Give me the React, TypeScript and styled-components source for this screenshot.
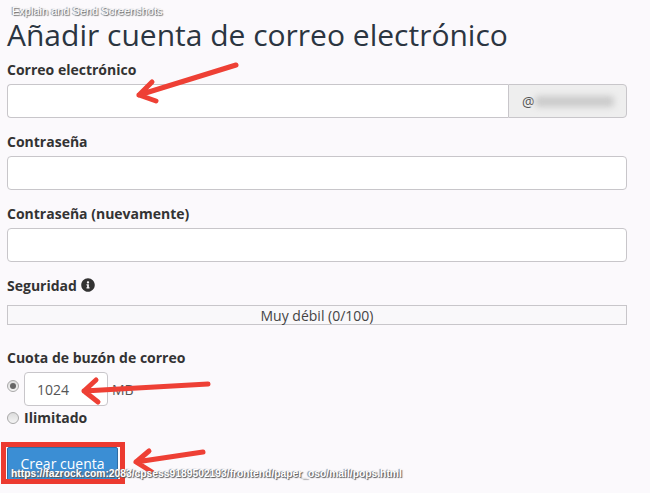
import styled, { createGlobalStyle } from "styled-components";
import { FaInfoCircle } from "react-icons/fa";

const GlobalStyle = createGlobalStyle`
  html, body {
    margin: 0;
    padding: 0;
    background-color: #fbf9fc;
  }
  * {
    box-sizing: border-box;
  }
`;

const Page = styled.div`
  position: relative;
  width: 650px;
  height: 493px;
  overflow: hidden;
  padding: 18px 23px 0 7px;
  font-family: "Open Sans", "Liberation Sans", sans-serif;
  color: #333;
  font-size: 14px;
`;
const Title = styled.h1`
  margin: 0 0 8px;
  font-size: 30px;
  line-height: 34px;
  font-weight: 400;
  color: #2b3541;
  white-space: nowrap;
`;
const Field = styled.div`
  margin-bottom: 14px;
`;
const Label = styled.label`
  display: flex;
  align-items: center;
  gap: 4px;
  height: 20px;
  padding-bottom: 2px;
  margin-bottom: 4px;
  font-size: 14px;
  font-weight: 700;
  color: #333;
`;
const SecurityLabel = styled(Label)`
  margin-bottom: 9px;
`;
const Input = styled.div`
  height: 34px;
  background-color: #fff;
  border: 1px solid #c8c6ca;
  border-radius: 4px;
`;
const InputGroup = styled.div`
  display: flex;
  height: 34px;
`;
const GroupInput = styled(Input)`
  flex: 1;
  height: 100%;
  border-right: none;
  border-radius: 4px 0 0 4px;
`;
const Addon = styled.div`
  display: flex;
  align-items: center;
  width: 119px;
  padding-left: 13px;
  background-color: #eeeeee;
  border: 1px solid #c8c6ca;
  border-radius: 0 4px 4px 0;
  color: #555;
  font-size: 14px;
`;
const BlurredDomain = styled.span`
  width: 79px;
  height: 11px;
  background-color: #cbcbcb;
  border-radius: 4px;
  filter: blur(3px);
`;
const Meter = styled.div`
  display: flex;
  align-items: center;
  justify-content: center;
  height: 20px;
  margin-bottom: 23px;
  background-color: #f9f8fa;
  border: 1px solid #c8c6ca;
  font-size: 14px;
  color: #444;
`;
const RadioRow = styled.div<{ $top?: boolean }>`
  display: flex;
  align-items: ${(props) => (props.$top ? "flex-start" : "center")};
  gap: 5px;
`;
const Radio = styled.span<{ $checked?: boolean }>`
  display: flex;
  align-items: center;
  justify-content: center;
  width: 12px;
  height: 12px;
  margin-top: ${(props) => (props.$checked ? "8px" : "0")};
  border: 1px solid #a9a9a9;
  border-radius: 50%;
  background: linear-gradient(#dcdcdc, #f4f4f4);
  &::after {
    content: "";
    display: ${(props) => (props.$checked ? "block" : "none")};
    width: 6px;
    height: 6px;
    border-radius: 50%;
    background-color: #666;
  }
`;
const QuotaInput = styled(Input)`
  display: flex;
  align-items: center;
  width: 84px;
  padding-left: 12px;
  font-size: 14px;
  color: #555;
`;
const Unit = styled.span`
  align-self: center;
  margin-left: -1px;
  color: #555;
  font-size: 14px;
`;
const UnlimitedLabel = styled.span`
  font-size: 14px;
  font-weight: 700;
  color: #333;
  line-height: 24px;
`;
const Button = styled.button`
  display: block;
  width: 111px;
  height: 34px;
  margin-top: 17px;
  padding: 0 0 2px;
  background-color: #3b8ed4;
  border: 1px solid #2e6da4;
  border-radius: 2px;
  color: #fff;
  font-family: inherit;
  font-size: 14px;
`;
const RedBox = styled.div`
  position: absolute;
  left: 1px;
  top: 442px;
  width: 124px;
  height: 42px;
  border: 5px solid #ec3a30;
`;
const Overlay = styled.svg`
  position: absolute;
  left: 0;
  top: 0;
  pointer-events: none;
`;
const Caption = styled.span`
  position: absolute;
  left: 12px;
  top: 5px;
  font-family: "Liberation Sans", Arial, sans-serif;
  font-size: 11px;
  line-height: 13px;
  color: #fff;
  text-shadow: 1px 1px 1px #666, -1px 0 1px #888;
  white-space: nowrap;
`;
const StatusUrl = styled.span`
  position: absolute;
  left: 11px;
  top: 467px;
  font-family: "Liberation Sans", Arial, sans-serif;
  font-size: 10.3px;
  font-weight: 700;
  line-height: 14px;
  color: #fff;
  text-shadow: 1px 1px 1px #555, -1px 0 1px #777;
  white-space: nowrap;
`;

const App = () => {
  return (
    <Page>
      <GlobalStyle />
      <Title>Añadir cuenta de correo electrónico</Title>

      <Field>
        <Label>Correo electrónico</Label>
        <InputGroup>
          <GroupInput />
          <Addon>
            @<BlurredDomain />
          </Addon>
        </InputGroup>
      </Field>

      <Field>
        <Label>Contraseña</Label>
        <Input />
      </Field>

      <Field>
        <Label>Contraseña (nuevamente)</Label>
        <Input />
      </Field>

      <SecurityLabel>
        Seguridad <FaInfoCircle size={14} color="#333" />
      </SecurityLabel>
      <Meter>Muy débil (0/100)</Meter>

      <Label>Cuota de buzón de correo</Label>
      <RadioRow $top>
        <Radio $checked />
        <QuotaInput>1024</QuotaInput>
        <Unit>MB</Unit>
      </RadioRow>
      <RadioRow>
        <Radio />
        <UnlimitedLabel>Ilimitado</UnlimitedLabel>
      </RadioRow>

      <Button>Crear cuenta</Button>

      <RedBox />
      <Overlay width="650" height="493" viewBox="0 0 650 493" fill="none" stroke="#ee4035" strokeWidth="5" strokeLinecap="round" strokeLinejoin="round">
        <path d="M236 65 L139 95 M139 95 L156 101 M139 95 L152 82" />
        <path d="M208 384 L84 391 M84 391 L98 402 M84 391 L96 380" />
        <path d="M203 452 L136 462 M136 462 L152 472 M136 462 L149 451" />
      </Overlay>

      <Caption>Explain and Send Screenshots</Caption>
      <StatusUrl>https://fazrock.com:2083/cpsess9189502193/frontend/paper_oso/mail/pops.html</StatusUrl>
    </Page>
  );
};

export default App;
